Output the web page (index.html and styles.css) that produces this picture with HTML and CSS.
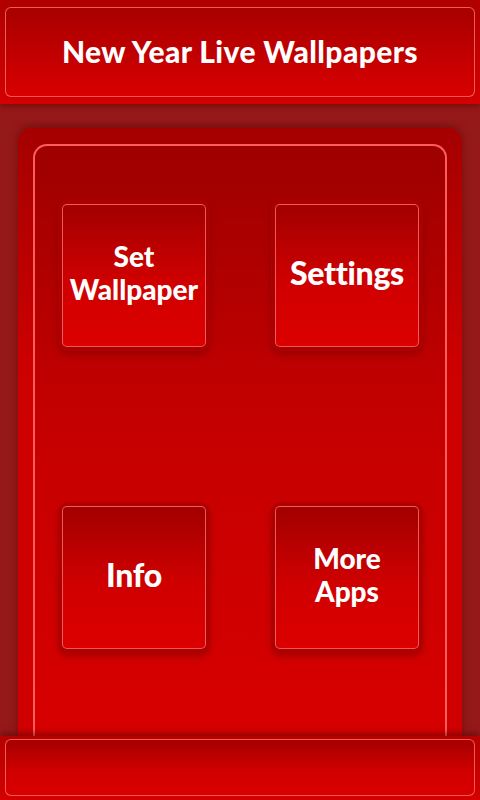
FILE: index.html
```html
<!DOCTYPE html>
<html>
<head>
<meta charset="utf-8">
<link rel="stylesheet" href="styles.css">
</head>
<body>
<div class="screen">
  <header class="header">
    <div class="header-box"><h1 class="title">New Year Live Wallpapers</h1></div>
  </header>
  <main class="main">
    <div class="frame">
      <div class="panel">
        <div class="grid">
          <div class="btn-wrap"><div class="btn two">Set<br>Wallpaper</div></div>
          <div class="btn-wrap"><div class="btn">Settings</div></div>
          <div class="btn-wrap"><div class="btn">Info</div></div>
          <div class="btn-wrap"><div class="btn two">More<br>Apps</div></div>
        </div>
      </div>
    </div>
  </main>
  <footer class="footer"><div class="footer-box"></div></footer>
</div>
</body>
</html>
```
FILE: styles.css
```css
html, body { margin: 0; padding: 0; }
body { width: 480px; height: 800px; overflow: hidden; background: #951818; font-family: Lato, "Open Sans", sans-serif; }
.screen { width: 480px; height: 800px; display: flex; flex-direction: column; background: #961919; }
.header { height: 104px; box-sizing: border-box; padding: 7px 5px 7px; background: linear-gradient(#b00000, #d30000); box-shadow: 0 3px 5px rgba(90,0,0,0.45); position: relative; z-index: 2; }
.header-box { height: 90px; box-sizing: border-box; border: 1px solid rgba(255,110,110,0.8); border-radius: 6px; background: linear-gradient(#a80000, #d80000); display: flex; align-items: center; justify-content: center; }
.title { margin: 0 0 2px; color: #fff; font-size: 30px; font-weight: 900; letter-spacing: 0.4px; }
.main { flex: 1; display: flex; flex-direction: column; padding: 24px 18px 0; overflow: hidden; }
.frame { flex: 1; padding: 16px 15px 0; border-radius: 14px 14px 0 0; background: linear-gradient(#a50000, #cd0000 40%, #d00000); box-shadow: 0 -2px 8px rgba(80,0,0,0.5); display: flex; flex-direction: column; }
.panel { flex: 1; box-sizing: border-box; border: 2px solid #ff5c5c; border-bottom: none; border-radius: 14px 14px 0 0; background: linear-gradient(#9e0000, #c40000 45%, #d80000); padding: 58px 26px 0 27px; }
.grid { display: grid; grid-template-columns: 144px 144px; justify-content: space-between; row-gap: 159px; }
.btn-wrap { border-radius: 6px; box-shadow: 0 0 0 4px rgba(175,0,0,0.85), 0 4px 6px 4px rgba(80,0,0,0.3); }
.btn { height: 143px; box-sizing: border-box; border: 1px solid rgba(255,120,120,0.75); border-radius: 5px; background: linear-gradient(#a20000, #d00000 55%, #dc0000); color: #fff; display: flex; align-items: center; justify-content: center; text-align: center; font-size: 32px; font-weight: 900; letter-spacing: -0.3px; line-height: 33px; padding-bottom: 6px; }
.btn.two { font-size: 28px; line-height: 33px; letter-spacing: 0; }
.footer { height: 64px; box-sizing: border-box; padding: 3px 5px 4px; background: linear-gradient(#b40000, #d40000); box-shadow: 0 -3px 6px rgba(80,0,0,0.5); position: relative; z-index: 2; }
.footer-box { height: 100%; box-sizing: border-box; border: 1px solid rgba(255,110,110,0.8); border-radius: 6px; background: linear-gradient(#a60000, #d20000 60%, #d80000); }
```
